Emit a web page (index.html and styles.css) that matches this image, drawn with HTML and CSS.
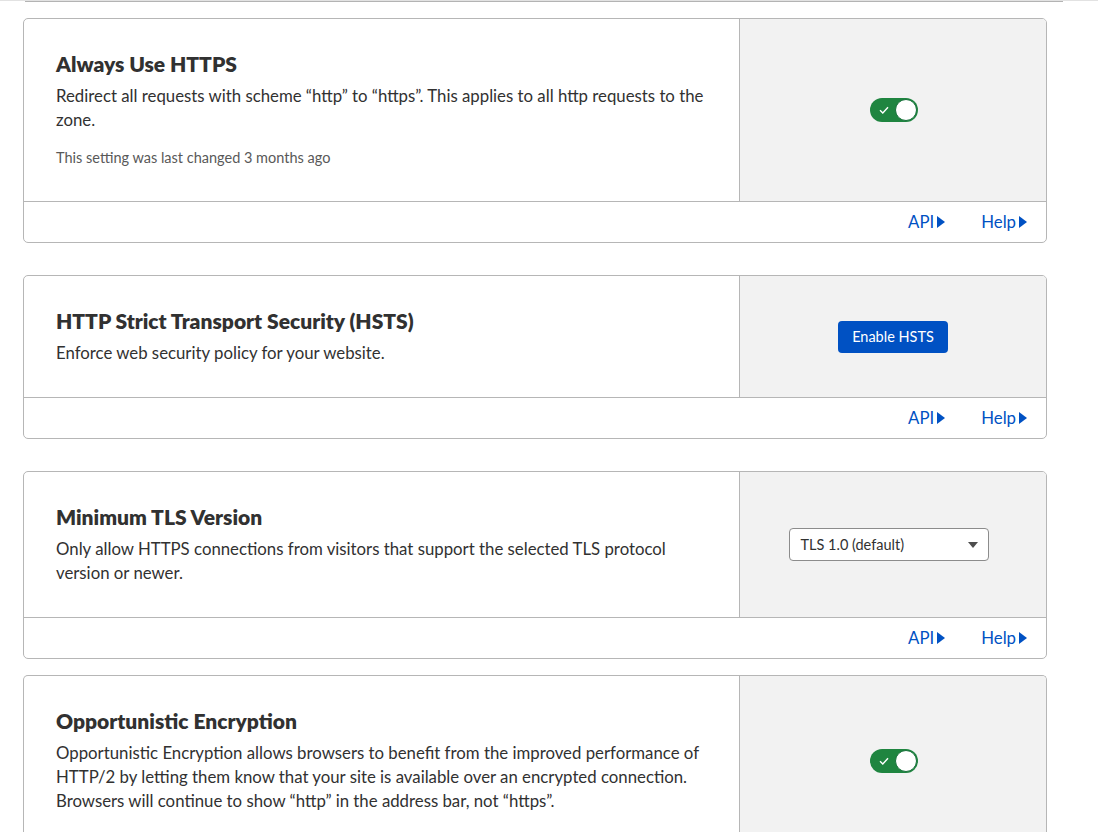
FILE: index.html
```html
<!DOCTYPE html>
<html lang="en">
<head>
<meta charset="utf-8">
<title>Edge Certificates</title>
<link rel="stylesheet" href="styles.css">
</head>
<body>
<div class="page">
  <div class="top-rule"><div class="prev-end"></div></div>

  <section class="card">
    <div class="card-main">
      <div class="card-body">
        <h3 class="card-title">Always Use HTTPS</h3>
        <p class="card-desc">Redirect all requests with scheme “http” to “https”. This applies to all http requests to the zone.</p>
        <p class="card-meta">This setting was last changed 3 months ago</p>
      </div>
      <div class="card-control">
        <span class="toggle on" role="switch" aria-checked="true">
          <svg class="toggle-check" width="10" height="8" viewBox="0 0 10 8"><path d="M1 4.2 L3.8 7 L9 1.2" fill="none" stroke="#fff" stroke-width="1.4"/></svg>
          <span class="toggle-knob"></span>
        </span>
      </div>
    </div>
    <div class="card-footer">
      <a class="footer-link" href="#">API<svg width="8" height="12" viewBox="0 0 8 12"><path d="M0 0 L8 6 L0 12 Z" fill="currentColor"/></svg></a>
      <a class="footer-link" href="#">Help<svg width="8" height="12" viewBox="0 0 8 12"><path d="M0 0 L8 6 L0 12 Z" fill="currentColor"/></svg></a>
    </div>
  </section>

  <section class="card">
    <div class="card-main">
      <div class="card-body">
        <h3 class="card-title">HTTP Strict Transport Security (HSTS)</h3>
        <p class="card-desc">Enforce web security policy for your website.</p>
      </div>
      <div class="card-control">
        <button class="btn-primary" type="button">Enable HSTS</button>
      </div>
    </div>
    <div class="card-footer">
      <a class="footer-link" href="#">API<svg width="8" height="12" viewBox="0 0 8 12"><path d="M0 0 L8 6 L0 12 Z" fill="currentColor"/></svg></a>
      <a class="footer-link" href="#">Help<svg width="8" height="12" viewBox="0 0 8 12"><path d="M0 0 L8 6 L0 12 Z" fill="currentColor"/></svg></a>
    </div>
  </section>

  <section class="card">
    <div class="card-main">
      <div class="card-body">
        <h3 class="card-title">Minimum TLS Version</h3>
        <p class="card-desc">Only allow HTTPS connections from visitors that support the selected TLS protocol version or newer.</p>
      </div>
      <div class="card-control">
        <div class="select">
          <span class="select-value">TLS 1.0 (default)</span>
          <svg class="select-caret" width="10" height="6" viewBox="0 0 10 6"><path d="M0 0 L10 0 L5 6 Z" fill="#4d4d4d"/></svg>
        </div>
      </div>
    </div>
    <div class="card-footer">
      <a class="footer-link" href="#">API<svg width="8" height="12" viewBox="0 0 8 12"><path d="M0 0 L8 6 L0 12 Z" fill="currentColor"/></svg></a>
      <a class="footer-link" href="#">Help<svg width="8" height="12" viewBox="0 0 8 12"><path d="M0 0 L8 6 L0 12 Z" fill="currentColor"/></svg></a>
    </div>
  </section>

  <section class="card card-last">
    <div class="card-main">
      <div class="card-body">
        <h3 class="card-title">Opportunistic Encryption</h3>
        <p class="card-desc">Opportunistic Encryption allows browsers to benefit from the improved performance of HTTP/2 by letting them know that your site is available over an encrypted connection. Browsers will continue to show “http” in the address bar, not “https”.</p>
      </div>
      <div class="card-control">
        <span class="toggle on" role="switch" aria-checked="true">
          <svg class="toggle-check" width="10" height="8" viewBox="0 0 10 8"><path d="M1 4.2 L3.8 7 L9 1.2" fill="none" stroke="#fff" stroke-width="1.4"/></svg>
          <span class="toggle-knob"></span>
        </span>
      </div>
    </div>
  </section>
</div>
</body>
</html>
```

FILE: styles.css
```css
* { box-sizing: border-box; }

html, body {
  margin: 0;
  padding: 0;
  background: #ffffff;
}

body {
  font-family: "Lato", "Noto Sans", "Liberation Sans", sans-serif;
  color: #313131;
  font-size: 16.8px;
  line-height: 24px;
}

.page {
  display: flex;
  flex-direction: column;
  gap: 32px;
}

.top-rule {
  border-top: 1px solid #e2e2e2;
  height: 2px;
  padding: 0 35px 0 25px;
  margin-bottom: -16px;
}

.prev-end {
  height: 1px;
  background: #b3b3b3;
}

.card {
  margin: 0 51px 0 23px;
  border: 1px solid #b6b6b6;
  border-radius: 5px;
  overflow: hidden;
  background: #fff;
}

.card-last {
  margin-top: -16px;
  border-bottom: none;
  border-bottom-left-radius: 0;
  border-bottom-right-radius: 0;
}

.card-main {
  display: flex;
}

.card-body {
  flex: 0 0 715px;
  padding: 31px 32px 32px 32px;
}

.card-title {
  margin: 0;
  font-size: 21px;
  line-height: 28px;
  font-weight: 800;
  color: #313131;
}

.card-desc {
  margin: 6px 0 0;
  font-size: 16.8px;
  line-height: 24px;
  color: #313131;
}

.card-meta {
  margin: 16px 0 1px;
  font-size: 14.5px;
  line-height: 20px;
  color: #595959;
}

.card-control {
  flex: 1;
  border-left: 1px solid #b6b6b6;
  background: #f2f2f2;
  display: flex;
  align-items: center;
  justify-content: center;
}

.card-footer {
  border-top: 1px solid #b6b6b6;
  height: 41px;
  display: flex;
  align-items: center;
  justify-content: flex-end;
  gap: 36px;
  padding: 0 19px 0 0;
}

.footer-link {
  display: inline-flex;
  align-items: center;
  gap: 3px;
  color: #0051c3;
  text-decoration: none;
  font-size: 16.8px;
  line-height: 20px;
}

.toggle {
  position: relative;
  display: inline-block;
  width: 48px;
  height: 24px;
  margin-left: 2px;
  border-radius: 12px;
  background: #1f8540;
}

.toggle-check {
  position: absolute;
  left: 9px;
  top: 8px;
}

.toggle-knob {
  position: absolute;
  right: 1px;
  top: 1px;
  width: 22px;
  height: 22px;
  border-radius: 50%;
  background: #fff;
  border: 1px solid #17703a;
}

.btn-primary {
  width: 110px;
  height: 32px;
  border: none;
  border-radius: 4px;
  background: #0051c3;
  color: #fff;
  font-family: inherit;
  font-size: 14.5px;
  line-height: 20px;
  padding: 0;
}

.select {
  width: 200px;
  height: 33px;
  margin-right: 9px;
  border: 1px solid #8c8c8c;
  border-radius: 4px;
  background: #fff;
  display: flex;
  align-items: center;
  justify-content: space-between;
  padding: 0 10px 0 11px;
  font-size: 14.5px;
  color: #313131;
}
```
